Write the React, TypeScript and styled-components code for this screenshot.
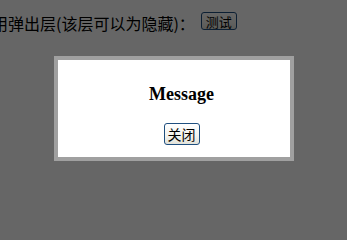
import React from "react"
import styled, { createGlobalStyle } from "styled-components"

const GlobalStyle = createGlobalStyle`
  html, body {
    margin: 0;
    padding: 0;
    background: #fff;
    overflow: hidden;
  }
`

export default function App() {
  return (
    <>
      <GlobalStyle />
      <Page>
        <Lead>用弹出层(该层可以为隐藏)：</Lead>
        <TestButton type="button">测试</TestButton>
      </Page>
      <Overlay />
      <Dialog>
        <Title>Message</Title>
        <CloseButton type="button">关闭</CloseButton>
      </Dialog>
    </>
  )
}

const Page = styled.div`
  display: flex;
  align-items: flex-start;
  margin: 12px 0 0 -8px;
  height: 219px;
  font-family: "Noto Sans CJK SC", "Liberation Serif", serif;
  font-size: 16px;
  line-height: 23px;
  color: #000;
  white-space: nowrap;
`

const Lead = styled.span`
  display: block;
`

const XpButton = styled.button`
  box-sizing: border-box;
  display: inline-flex;
  align-items: center;
  justify-content: center;
  padding: 0;
  border: 1px solid #1f4f7f;
  border-radius: 3px;
  background: linear-gradient(#ffffff, #f3f3ee 60%, #e2e2da);
  color: #000;
  font-family: "Noto Sans CJK SC", sans-serif;
  line-height: 1;
`

const TestButton = styled(XpButton)`
  width: 36px;
  height: 18px;
  margin-left: 6px;
  font-size: 13px;
`

const Overlay = styled.div`
  position: fixed;
  inset: 0;
  background: rgba(0, 0, 0, 0.6);
`

const Dialog = styled.div`
  position: fixed;
  left: 54px;
  top: 56px;
  box-sizing: border-box;
  width: 240px;
  height: 105px;
  padding: 25px 0 0 15px;
  border: 4px solid #a0a0a0;
  background: #fff;
  display: flex;
  flex-direction: column;
  align-items: center;
`

const Title = styled.div`
  font-family: "Liberation Serif", serif;
  font-weight: bold;
  font-size: 18px;
  line-height: 18px;
  color: #000;
`

const CloseButton = styled(XpButton)`
  width: 36px;
  height: 22px;
  margin-top: 20px;
  font-size: 14px;
`
